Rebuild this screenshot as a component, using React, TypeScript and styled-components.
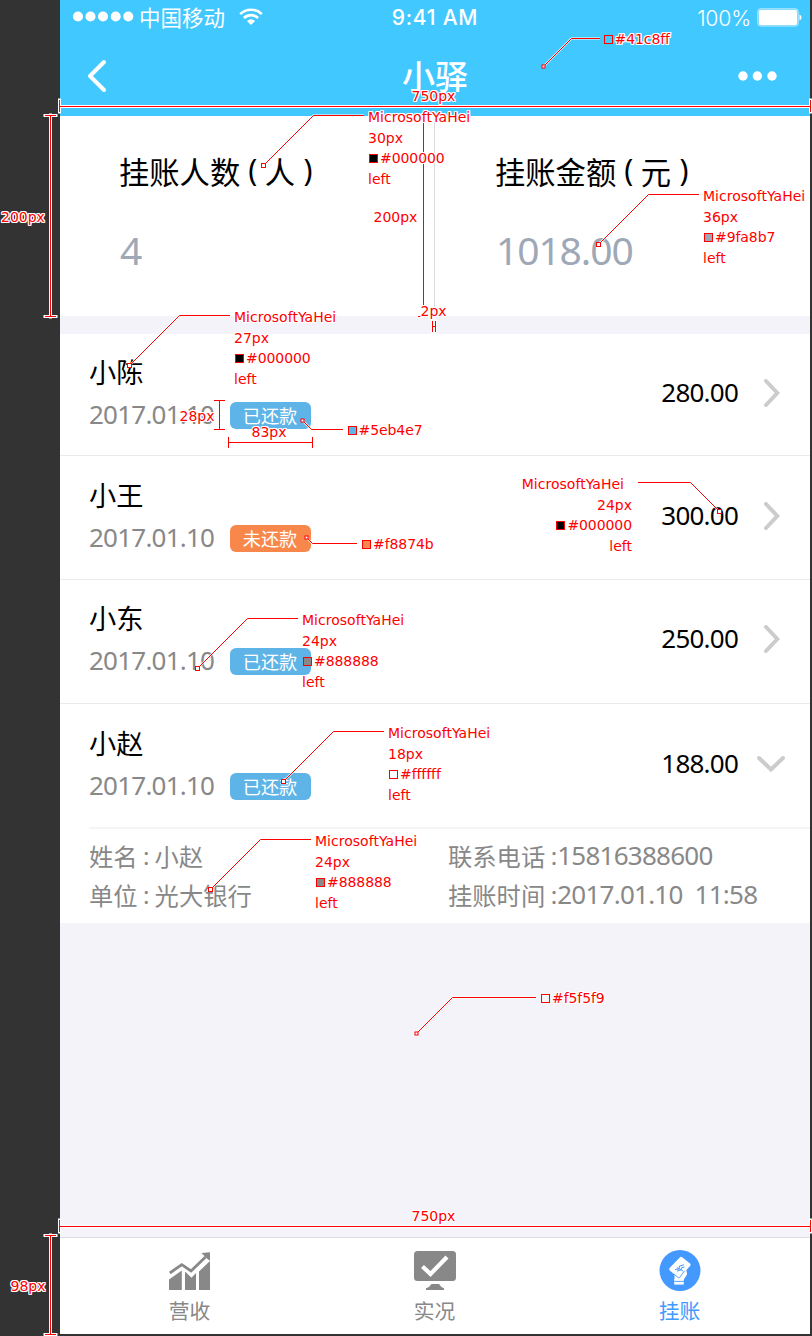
import React from "react";
import styled, { createGlobalStyle } from "styled-components";

const cjk = `"Noto Sans", "Noto Sans CJK SC", sans-serif`;

const GlobalStyle = createGlobalStyle`
  * { box-sizing: border-box; }
  body { margin: 0; background: #333333; font-family: ${cjk}; }
`;

const Board = styled.main`
  position: relative;
  width: 812px;
  height: 1336px;
  padding: 0 2px 2px 60px;
  background: #333333;
  overflow: hidden;
`;

const Phone = styled.div`
  display: flex;
  flex-direction: column;
  width: 750px;
  height: 1334px;
  background: #f4f3f9;
`;

const Header = styled.header`
  display: flex;
  flex-direction: column;
  height: 116px;
  background: #41c8ff;
  color: #ffffff;
`;

const StatusBar = styled.div`
  display: grid;
  grid-template-columns: 1fr auto 1fr;
  align-items: center;
  height: 32px;
  padding: 0 8px;
`;

const StatusGroup = styled.div<{ $end?: boolean }>`
  display: flex;
  align-items: center;
  justify-content: ${(p) => (p.$end ? "flex-end" : "flex-start")};
  padding-left: ${(p) => (p.$end ? 0 : 5)}px;
`;

const Carrier = styled.span`
  margin: 0 14px 0 5px;
  font: 400 21.5px/32px "Noto Sans CJK SC", sans-serif;
`;

const Clock = styled.span`
  padding-top: 2px;
  font: 500 21px/32px Inter, sans-serif;
  letter-spacing: 0.75px;
`;

const Percent = styled.span`
  margin-right: 6px;
  padding-top: 1px;
  font: 300 21.3px/32px Inter, sans-serif;
  letter-spacing: -0.2px;
`;

const NavBar = styled.div`
  display: grid;
  grid-template-columns: 1fr auto 1fr;
  align-items: center;
  height: 84px;
  padding: 4px 26px 0;
`;

const Title = styled.h1`
  margin: 0 0 3px;
  font: 500 33px/48px "Noto Sans CJK SC", sans-serif;
`;

const MoreSlot = styled.div`
  display: flex;
  justify-content: flex-end;
  padding-right: 7px;
`;

const Summary = styled.section`
  display: flex;
  height: 200px;
  margin-bottom: 18px;
  background: #ffffff;
`;

const Stat = styled.div<{ $divided?: boolean }>`
  display: flex;
  flex-direction: column;
  width: 375px;
  padding: 33px 0 0 ${(p) => (p.$divided ? 59 : 60)}px;
  border-right: ${(p) => (p.$divided ? "1px solid #dddddf" : "none")};
`;

const StatLabel = styled.div`
  display: flex;
  font: 400 30.3px/44px "Noto Sans CJK SC", sans-serif;
  color: #000000;
`;

const Paren = styled.span<{ $close?: boolean }>`
  width: ${(p) => (p.$close ? 20 : 24.5)}px;
  padding-left: ${(p) => (p.$close ? 8.5 : 8)}px;
  font: 400 30px/42px "Noto Sans", sans-serif;
`;

const StatValue = styled.div`
  margin: 29px 0 0 1px;
  font: 400 39px/56px "Noto Sans", sans-serif;
  letter-spacing: -1.1px;
  color: #9fa8b7;
`;

const List = styled.section`
  background: #ffffff;
`;

const Row = styled.div<{ $height: number; $top: number; $open?: boolean }>`
  height: ${(p) => p.$height}px;
  margin-left: ${(p) => (p.$open ? 29 : 0)}px;
  padding: ${(p) => p.$top}px 25px 0 ${(p) => (p.$open ? 0 : 29)}px;
  border-bottom: ${(p) => (p.$open ? "2px solid #f5f5f5" : "1px solid #ebebeb")};
`;

const RowBody = styled.div`
  display: flex;
  align-items: center;
  height: 74px;
`;

const Person = styled.div`
  flex: 1;
  display: flex;
  flex-direction: column;
  gap: 10px;
`;

const Name = styled.div`
  height: 34px;
  font: 400 27.2px/30px "Noto Sans CJK SC", sans-serif;
  color: #000000;
`;

const Meta = styled.div`
  display: flex;
  align-items: center;
  height: 30px;
`;

const DateText = styled.span`
  width: 141px;
  height: 30px;
  font: 400 26px/28px "Noto Sans", sans-serif;
  letter-spacing: -0.77px;
  color: #888888;
`;

const Badge = styled.span<{ $unpaid?: boolean }>`
  width: 81px;
  height: 27px;
  padding-right: 1px;
  border-radius: 6px;
  background: ${(p) => (p.$unpaid ? "#f8874b" : "#5eb4e7")};
  color: #ffffff;
  font: 400 18.2px/26px "Noto Sans CJK SC", sans-serif;
  text-align: center;
`;

const Amount = styled.span`
  height: 34px;
  font: 400 26px/32px "Noto Sans", sans-serif;
  letter-spacing: -0.77px;
  color: #000000;
`;

const ArrowSlot = styled.span`
  display: flex;
  justify-content: center;
  width: 28px;
  margin: 0 0 1px 19px;
`;

const Details = styled.div`
  display: grid;
  grid-template-columns: 359px 1fr;
  grid-auto-rows: 39px;
  height: 94px;
  padding: 8px 0 0 29px;
`;

const Field = styled.div`
  display: flex;
  font: 400 24.3px/38px "Noto Sans CJK SC", sans-serif;
  color: #888888;
  white-space: pre;
`;

const Colon = styled.span<{ $wide?: boolean }>`
  width: ${(p) => (p.$wide ? 11.5 : 6.5)}px;
  margin-left: 5.5px;
  font-family: "Noto Sans", sans-serif;
`;

const Digits = styled.span`
  font: 400 26px/36px "Noto Sans", sans-serif;
  letter-spacing: -0.75px;
`;

const TabBar = styled.nav`
  display: flex;
  height: 97px;
  margin-top: auto;
  padding: 0 7px;
  border-top: 1px solid #dedee2;
  background: #ffffff;
`;

const Tab = styled.a<{ $active?: boolean }>`
  display: flex;
  flex-direction: column;
  align-items: center;
  width: 245px;
  padding-top: 11px;
  color: ${(p) => (p.$active ? "#4499ff" : "#888888")};
  font: 400 20.8px/30px "Noto Sans CJK SC", sans-serif;
`;

const TabIcon = styled.span`
  display: flex;
  height: 42px;
  margin-bottom: 4px;
`;

/* Redline annotations that lie over the screen */
const Overlay = styled.svg`
  position: absolute;
  inset: 0;
  pointer-events: none;
`;

const halo = `
  color: #ff0000;
  text-shadow: -1px -1px 0 #fff, 0 -1px 0 #fff, 1px -1px 0 #fff, -1px 0 0 #fff,
    1px 0 0 #fff, -1px 1px 0 #fff, 0 1px 0 #fff, 1px 1px 0 #fff;
`;

const Note = styled.div<{ $x: number; $y: number; $right?: boolean }>`
  position: absolute;
  left: ${(p) => p.$x}px;
  top: ${(p) => p.$y}px;
  display: flex;
  flex-direction: column;
  align-items: ${(p) => (p.$right ? "flex-end" : "flex-start")};
  width: ${(p) => (p.$right ? "110px" : "auto")};
  font: 400 14px/20.6px "DejaVu Sans", sans-serif;
  white-space: nowrap;
  ${halo}
`;

const FontName = styled.span<{ $right?: boolean }>`
  letter-spacing: 0.02px;
  margin-right: ${(p) => (p.$right ? 8 : 0)}px;
`;

const Hex = styled.span`
  display: flex;
  align-items: center;
  gap: 2px;
  letter-spacing: -0.08px;
`;

const Swatch = styled.i<{ $color: string }>`
  width: 9px;
  height: 9px;
  margin-left: 1px;
  border: 1px solid #ff0000;
  background: ${(p) => p.$color};
`;

type Callout = {
  color: string;
  font?: string;
  at: [number, number];
  right?: boolean;
  line: [number, number][];
};

const callouts: Callout[] = [
  { color: "#41c8ff", at: [602.5, 29], line: [[543.5, 66.5], [571.5, 38.5], [600, 38.5]] },
  { color: "#000000", font: "30px", at: [368, 107], line: [[263.5, 165.5], [313.5, 115.5], [364, 115.5]] },
  { color: "#9fa8b7", font: "36px", at: [703, 186], line: [[598.5, 244.5], [648.5, 194.5], [699, 194.5]] },
  { color: "#000000", font: "27px", at: [234, 307], line: [[129.5, 365.5], [179.5, 315.5], [230, 315.5]] },
  { color: "#5eb4e7", at: [346.5, 420], line: [[302.5, 420.5], [311.5, 429.5], [343, 429.5]] },
  { color: "#000000", font: "24px", right: true, at: [522, 474], line: [[719.5, 511.5], [690.5, 482.5], [638, 482.5]] },
  { color: "#f8874b", at: [361, 534], line: [[306.5, 537.5], [312.5, 543.5], [357, 543.5]] },
  { color: "#888888", font: "24px", at: [302, 610], line: [[197.5, 668.5], [247.5, 618.5], [298, 618.5]] },
  { color: "#ffffff", font: "18px", at: [388, 723], line: [[283.5, 781.5], [333.5, 731.5], [384, 731.5]] },
  { color: "#888888", font: "24px", at: [315, 831], line: [[210.5, 889.5], [260.5, 839.5], [311, 839.5]] },
  { color: "#f5f5f9", at: [540, 988], line: [[416.5, 1033.5], [452.5, 997.5], [536, 997.5]] },
];

const measures = [
  { text: "750px", x: 411.5, y: 86, d: "M60 106.5H810M59.5 100V112M810.5 100V112" },
  { text: "200px", x: 1, y: 207, d: "M50.5 115V317M45 115.5H56M45 316.5H56" },
  { text: "200px", x: 373.5, y: 207, d: "M423.5 115V305M418 115.5H429M418 316.5H421" },
  { text: "2px", x: 420.5, y: 301, d: "M432.5 321V332M435.5 321V332M432.5 326.5H435.5" },
  { text: "28px", x: 179.5, y: 406, d: "M219.5 400V430M214 400.5H225M214 429.5H225" },
  { text: "83px", x: 251.5, y: 422, d: "M228 442.5H313M228.5 437V448M312.5 437V448" },
  { text: "750px", x: 411.5, y: 1206, d: "M60 1226.5H810M59.5 1220V1232M810.5 1220V1232" },
  { text: "98px", x: 10.5, y: 1276, d: "M50.5 1235V1335M45 1235.5H56M45 1334.5H56" },
];

const rows = [
  { name: "小陈", amount: "280.00", height: 122, top: 22 },
  { name: "小王", amount: "300.00", height: 124, top: 23, unpaid: true },
  { name: "小东", amount: "250.00", height: 124, top: 22 },
  { name: "小赵", amount: "188.00", height: 125, top: 23, open: true },
];

const SignalDots = () => (
  <svg width="61" height="12" fill="#fff">
    {[5, 17.5, 30, 42.7, 55.3].map((x) => (
      <circle key={x} cx={x} cy="5.5" r="5" />
    ))}
  </svg>
);

const Wifi = () => (
  <svg width="24" height="18" viewBox="0 0 24 18" fill="none" stroke="#fff" strokeWidth="2.6">
    <path d="M1.2 6.1C7.2.2 16.8.2 22.8 6.1M4.9 10C9 6.2 15 6.2 19.1 10" />
    <path d="M12 17L7.9 13Q12 9.6 16.1 13Z" fill="#fff" stroke="none" />
  </svg>
);

const Battery = () => (
  <svg width="45" height="19" viewBox="0 0 45 19">
    <rect x=".6" y=".6" width="40.8" height="17.6" rx="3.4" fill="#fff" fillOpacity=".35" stroke="#fff" strokeOpacity=".4" />
    <rect x="2" y="2" width="38" height="15" rx="2" fill="#fff" />
    <path d="M42.5 6.5Q44.5 7.5 44.5 9.5T42.5 12.5Z" fill="#fff" />
  </svg>
);

const Arrow = ({ down }: { down?: boolean }) =>
  down ? (
    <svg width="28" height="18" fill="none" stroke="#cccccc" strokeWidth="4" strokeLinecap="round">
      <path d="M2 3L14 14.5L26 3" />
    </svg>
  ) : (
    <svg width="17" height="28" fill="none" stroke="#cccccc" strokeWidth="4" strokeLinecap="round">
      <path d="M3 2L14.3 14L3 26" />
    </svg>
  );

const ChartIcon = () => (
  <svg width="42" height="42" viewBox="0 0 42 42" fill="currentColor">
    <path d="M0 30.5L12.8 21.5V41H0ZM16 22.5L22.5 28.8L27 24V41H16ZM30 22.5L41 12V41H30Z" />
    <path d="M.8 24L12.8 15.6L22 22L36.5 8" fill="none" stroke="currentColor" strokeWidth="2.8" />
    <path d="M32.5 4L41 3.3V11.8L38.5 10L35.5 7Z" />
  </svg>
);

const MonitorIcon = () => (
  <svg width="42" height="42" viewBox="0 0 42 42" fill="currentColor">
    <rect y="2" width="42" height="30" rx="3.5" />
    <path d="M17.5 35H25Q27 38.5 30 39.2V41H12V39.2Q15.5 38.5 17.5 35Z" />
    <path d="M8.5 17.5L16.5 25L33 8" fill="none" stroke="#fff" strokeWidth="4.2" />
  </svg>
);

const LedgerIcon = () => (
  <svg width="42" height="42" viewBox="0 0 42 42">
    <circle cx="21" cy="21.5" r="20.5" fill="currentColor" />
    <path d="M21 8.3Q22 7.4 23.2 8.3L31 14.6Q32 15.6 31.2 16.7L20 29.5L10.6 21.2Q9.8 20 10.6 18.9Z" fill="#fff" />
    <path d="M16 20.5L20 20L20.5 17L25 15.8M18 22.2L22 20.8L22.5 18.8L25.5 18M17.8 18.5L24 22" fill="none" stroke="currentColor" strokeWidth="1" />
    <path d="M15.5 25L19 28.6Q21.5 28.2 22.5 25.5L24.8 21.2L26.5 19.5Q28.2 22.5 28 25.5L24.5 31H15.5Z" fill="#fff" />
    <path d="M14.8 24.8L19.5 28.8Q21.8 28.4 22.7 25.6L25.5 21.8" fill="none" stroke="currentColor" strokeWidth=".9" />
    <path d="M15.2 30H24.7V35.6H15.2Z" fill="#fff" />
    <path d="M15.2 32.4H24.7" stroke="currentColor" strokeWidth=".9" />
  </svg>
);

export default function App() {
  return (
    <Board>
      <GlobalStyle />
      <Phone>
        <Header>
          <StatusBar>
            <StatusGroup>
              <SignalDots />
              <Carrier>中国移动</Carrier>
              <Wifi />
            </StatusGroup>
            <Clock>9:41 AM</Clock>
            <StatusGroup $end>
              <Percent>100%</Percent>
              <Battery />
            </StatusGroup>
          </StatusBar>
          <NavBar>
            <svg width="22" height="34" fill="none" stroke="#fff" strokeWidth="4" strokeLinecap="round" strokeLinejoin="round">
              <path d="M18 3L4 17L18 31" />
            </svg>
            <Title>小驿</Title>
            <MoreSlot>
              <svg width="39" height="10" fill="#fff">
                <circle cx="5" cy="5" r="4.7" />
                <circle cx="19.4" cy="5" r="4.7" />
                <circle cx="34" cy="5" r="4.7" />
              </svg>
            </MoreSlot>
          </NavBar>
        </Header>

        <Summary>
          <Stat $divided>
            <StatLabel>
              挂账人数<Paren>(</Paren>人<Paren $close>)</Paren>
            </StatLabel>
            <StatValue>4</StatValue>
          </Stat>
          <Stat>
            <StatLabel>
              挂账金额<Paren>(</Paren>元<Paren $close>)</Paren>
            </StatLabel>
            <StatValue>1018.00</StatValue>
          </Stat>
        </Summary>

        <List>
          {rows.map((r) => (
            <Row key={r.name} $height={r.height} $top={r.top} $open={r.open}>
              <RowBody>
                <Person>
                  <Name>{r.name}</Name>
                  <Meta>
                    <DateText>2017.01.10</DateText>
                    <Badge $unpaid={r.unpaid}>{r.unpaid ? "未还款" : "已还款"}</Badge>
                  </Meta>
                </Person>
                <Amount>{r.amount}</Amount>
                <ArrowSlot>
                  <Arrow down={r.open} />
                </ArrowSlot>
              </RowBody>
            </Row>
          ))}
          <Details>
            <Field>姓名<Colon $wide>:</Colon>小赵</Field>
            <Field>联系电话<Colon>:</Colon><Digits>15816388600</Digits></Field>
            <Field>单位<Colon $wide>:</Colon>光大银行</Field>
            <Field>挂账时间<Colon>:</Colon><Digits>2017.01.10  11:58</Digits></Field>
          </Details>
        </List>

        <TabBar>
          <Tab><TabIcon><ChartIcon /></TabIcon>营收</Tab>
          <Tab><TabIcon><MonitorIcon /></TabIcon>实况</Tab>
          <Tab $active><TabIcon><LedgerIcon /></TabIcon>挂账</Tab>
        </TabBar>
      </Phone>

      <Overlay width="812" height="1336" fill="none">
        {measures.map((m, i) => (
          <g key={i}>
            <path d={m.d} stroke="#fff" strokeWidth="3" strokeLinecap="square" />
            <path d={m.d} stroke="#f00" />
          </g>
        ))}
        {callouts.map((c, i) => {
          const points = c.line.map((p) => p.join(",")).join(" ");
          const [x, y] = c.line[0];
          const s = c.font ? 4 : 3;
          return (
            <g key={i}>
              <polyline points={points} stroke="#fff" strokeOpacity=".7" strokeWidth="2.4" />
              <polyline points={points} stroke="#f00" />
              <rect x={x - s / 2} y={y - s / 2} width={s} height={s} fill="#fff" stroke="#f00" />
            </g>
          );
        })}
      </Overlay>
      {measures.map((m, i) => (
        <Note key={i} $x={m.x} $y={m.y}>{m.text}</Note>
      ))}
      {callouts.map((c, i) => (
        <Note key={i} $x={c.at[0]} $y={c.at[1]} $right={c.right}>
          {c.font && <FontName $right={c.right}>MicrosoftYaHei</FontName>}
          {c.font && <span>{c.font}</span>}
          <Hex><Swatch $color={c.color} />{c.color}</Hex>
          {c.font && <span>left</span>}
        </Note>
      ))}
    </Board>
  );
}
